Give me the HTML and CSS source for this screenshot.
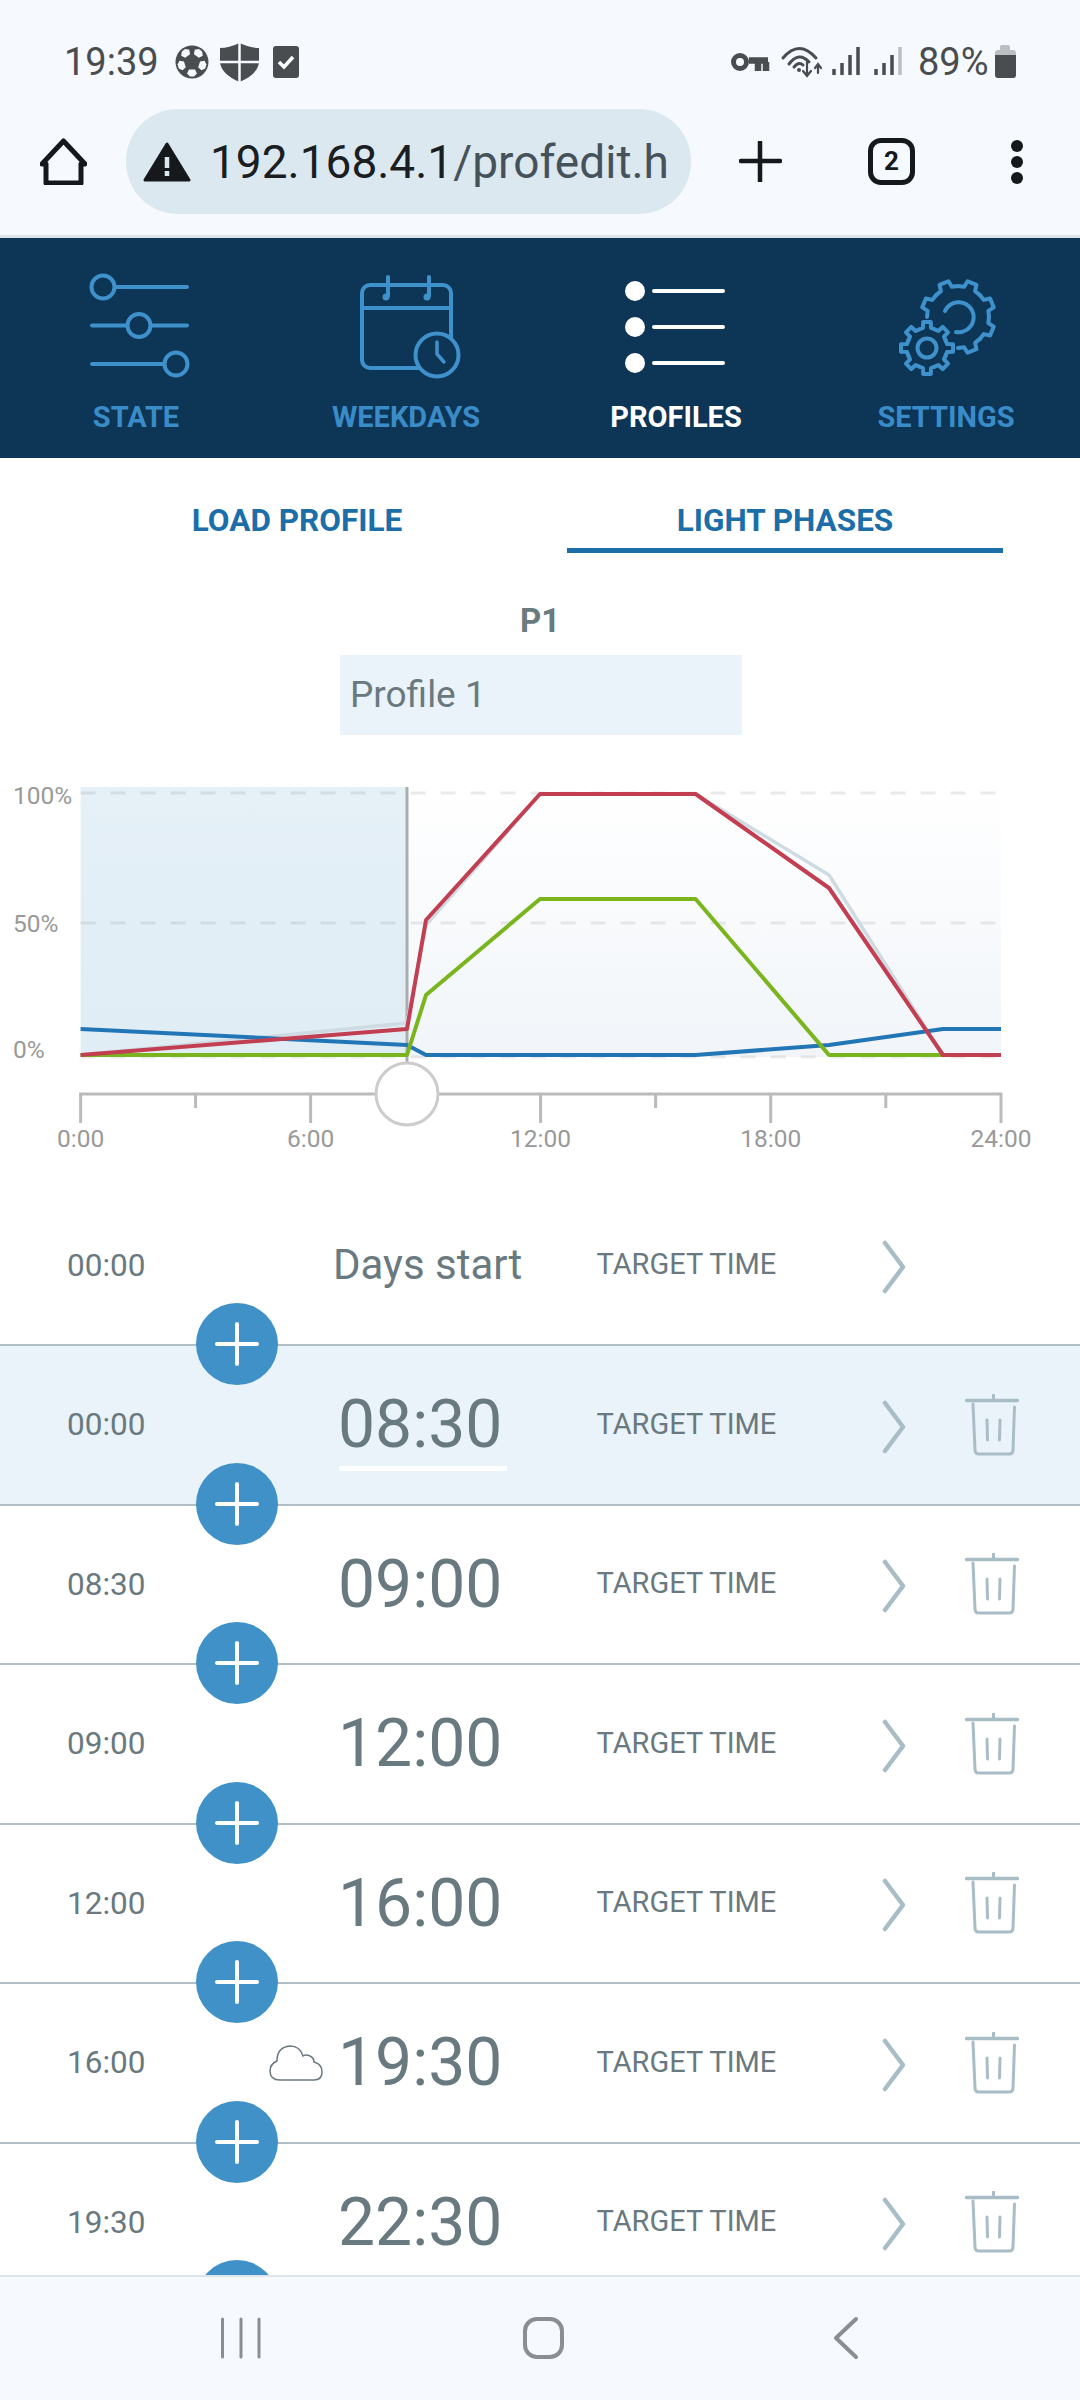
FILE: index.html
```html
<!DOCTYPE html>
<html lang="en">

<head>
    <meta charset="UTF-8">
    <meta name="viewport" content="width=device-width, initial-scale=1.0">
    <title>Profile editor</title>
    <link rel="stylesheet" href="styles.css">
</head>

<body>
    <!-- shared row icons -->
    <svg class="sprite" aria-hidden="true">
        <symbol id="chevron" viewBox="0 0 24 56">
            <path d="M3 4 L21 28 L3 52" fill="none" stroke="#a9bdc6" stroke-width="4.5" stroke-linecap="round" stroke-linejoin="round"/>
        </symbol>
        <symbol id="trash" viewBox="0 0 54 64">
            <g fill="none" stroke="#a9bdc6" stroke-width="3" stroke-linecap="round">
                <path d="M1.5 6.5 H52.5" stroke-width="3.5"/>
                <path d="M28.5 1 V6"/>
                <path d="M8 10 L10 56 Q10 60 14 60 H44 Q48 60 48 56 L49.5 13"/>
                <path d="M22 26 L22.5 46 M35 26 L34.5 46"/>
            </g>
        </symbol>
        <symbol id="plus" viewBox="0 0 82 82">
            <path d="M21 41 H61 M41 21 V61" fill="none" stroke="#fff" stroke-width="4" stroke-linecap="round"/>
        </symbol>
        <path id="tooth-small" d="M-8 -18.5 L-4 -20 L-3.8 -26 L3.8 -26 L4 -20 L8 -18.5"/>
        <path id="tooth-big" d="M-11.9 -28.6 L-5.9 -30.4 L-4.8 -36.7 L4.8 -36.7 L5.9 -30.4 L11.9 -28.6"/>
        <path id="patch" d="M-3 -7.5 L3 -7.5 L5 -11.5 L2 -14.5 L-2 -14.5 L-5 -11.5Z"/>
    </svg>

    <header class="browser">
        <div class="status">
            <span class="status-time">19:39</span>
            <svg class="status-left" viewBox="170 30 135 64">
                <circle cx="192" cy="62" r="16.5" fill="#4a4d50"/>
                <g transform="translate(192 62)" fill="#f6f9fe">
                    <use href="#patch" transform="rotate(36)"/>
                    <use href="#patch" transform="rotate(108)"/>
                    <use href="#patch" transform="rotate(180)"/>
                    <use href="#patch" transform="rotate(252)"/>
                    <use href="#patch" transform="rotate(324)"/>
                </g>
                <path d="M239.5 43 Q229 48 220 48 V62 Q221 74 239.5 82 Q258 74 259 62 V48 Q250 48 239.5 43Z" fill="#4a4d50"/>
                <path d="M239.5 43 V82 M220 62 H259" stroke="#f6f9fe" stroke-width="2.5"/>
                <rect x="273" y="46" width="26" height="32" rx="3" fill="#4a4d50"/>
                <path d="M279 62 L284 67 L293 57" fill="none" stroke="#fff" stroke-width="3.5"/>
            </svg>
            <svg class="status-right" viewBox="725 30 190 64">
                <g fill="none" stroke="#4a4d50">
                    <circle cx="740" cy="62" r="6.5" stroke-width="5"/>
                    <path d="M749 60.5 H768 M758 62 V71 M766 62 V71" stroke-width="6.5"/>
                </g>
                <g fill="none" stroke="#4a4d50" stroke-width="3" stroke-linecap="round">
                    <path d="M783 58 Q799 39 816 58"/>
                    <path d="M789 64 Q799 51 809 62"/>
                    <path d="M794 67 Q799 61 803 65"/>
                    <path d="M807 62 V75 M803 71 L807 76 L811 71 M818 73 V65 M815 68 L818 64 L821 68" stroke-width="2.2"/>
                </g>
                <circle cx="799" cy="70" r="2" fill="#4a4d50"/>
                <g stroke="#4a4d50" stroke-width="3.5">
                    <path d="M834 75 V69 M842 75 V63 M850 75 V55 M858 75 V47"/>
                    <path d="M876 75 V69 M884 75 V63 M892 75 V55"/>
                </g>
                <path d="M900 75 V47" stroke="#bcbfc2" stroke-width="3.5"/>
            </svg>
            <span class="status-battery">89%</span>
            <svg class="status-cell" viewBox="993 30 25 64">
                <path d="M1000 50 V47 Q1000 45 1002 45 H1008 Q1010 45 1010 47 V50 H1013 Q1016 50 1016 53 V56 H995 V53 Q995 50 998 50Z" fill="#bcbfc2"/>
                <path d="M995 55 H1016 V75 Q1016 78 1013 78 H998 Q995 78 995 75Z" fill="#4a4d50"/>
            </svg>
        </div>
        <div class="toolbar">
            <svg class="icon-home" viewBox="40 138 47 47">
                <path d="M46 183 V164 H42 L63.5 141 L85 164 H81 V183Z" fill="none" stroke="#15191c" stroke-width="5" stroke-linejoin="round"/>
            </svg>
            <div class="url">
                <svg class="icon-warn" viewBox="143 140 48 40">
                    <path d="M167 142 L189 178 H145Z" fill="#15191c" stroke="#15191c" stroke-width="3" stroke-linejoin="round"/>
                    <path d="M167 155 V166 M167 169 V174" stroke="#dbe8f0" stroke-width="4.5"/>
                </svg>
                <div class="url-text"><span class="url-host">192.168.4.1</span>/profedit.html</div>
            </div>
            <svg class="icon-add" viewBox="739 141 43 41">
                <path d="M741 161 H780 M760 142 V181" fill="none" stroke="#15191c" stroke-width="4.5" stroke-linecap="round"/>
            </svg>
            <div class="tab-count">2</div>
            <div class="menu-dots"><i></i><i></i><i></i></div>
        </div>
    </header>

    <nav class="nav">
        <a class="nav-item">
            <svg viewBox="0 265 270 130">
                <g fill="none" stroke="#3f91cb" stroke-width="4" stroke-linecap="round">
                    <circle cx="103" cy="287" r="11.5"/>
                    <path d="M115 287 H187"/>
                    <circle cx="139" cy="325.5" r="11.5"/>
                    <path d="M92 325.5 H127 M151 325.5 H187"/>
                    <circle cx="176" cy="364" r="11.5"/>
                    <path d="M92 364 H164"/>
                </g>
            </svg>
            <span>STATE</span>
        </a>
        <a class="nav-item">
            <svg viewBox="270 265 270 130">
                <g fill="none" stroke="#3f91cb" stroke-width="4" stroke-linecap="round">
                    <rect x="362" y="285" width="89" height="83" rx="8"/>
                    <path d="M362 308 H451"/>
                    <path d="M388 277 V296 M429 277 V296"/>
                </g>
                <circle cx="386" cy="297" r="3.5" fill="#3f91cb"/>
                <circle cx="427" cy="297" r="3.5" fill="#3f91cb"/>
                <circle cx="437" cy="355" r="21.5" fill="#0d3556" stroke="#3f91cb" stroke-width="4"/>
                <path d="M437 342 V354 L444 362" fill="none" stroke="#3f91cb" stroke-width="3.5" stroke-linecap="round"/>
            </svg>
            <span>WEEKDAYS</span>
        </a>
        <a class="nav-item">
            <svg viewBox="540 265 270 130">
                <g fill="#fff">
                    <circle cx="635" cy="291" r="10"/>
                    <circle cx="635" cy="327" r="10"/>
                    <circle cx="635" cy="363" r="10"/>
                </g>
                <path d="M654 291 H723 M654 327 H723 M654 363 H723" stroke="#fff" stroke-width="4" stroke-linecap="round"/>
            </svg>
            <span class="active">PROFILES</span>
        </a>
        <a class="nav-item">
            <svg viewBox="810 265 270 130">
                <g fill="none" stroke="#3f91cb" stroke-width="4" stroke-linecap="round" stroke-linejoin="round">
                    <g transform="translate(958 317)">
                        <use href="#tooth-big" transform="rotate(22.5)"/>
                        <use href="#tooth-big" transform="rotate(67.5)"/>
                        <use href="#tooth-big" transform="rotate(112.5)"/>
                        <use href="#tooth-big" transform="rotate(157.5)"/>
                        <use href="#tooth-big" transform="rotate(292.5)"/>
                        <use href="#tooth-big" transform="rotate(337.5)"/>
                        <path d="M-13 -6 A15 15 0 1 1 -2 15"/>
                    </g>
                    <g transform="translate(927 348)">
                        <use href="#tooth-small"/>
                        <use href="#tooth-small" transform="rotate(45)"/>
                        <use href="#tooth-small" transform="rotate(90)"/>
                        <use href="#tooth-small" transform="rotate(135)"/>
                        <use href="#tooth-small" transform="rotate(180)"/>
                        <use href="#tooth-small" transform="rotate(225)"/>
                        <use href="#tooth-small" transform="rotate(270)"/>
                        <use href="#tooth-small" transform="rotate(315)"/>
                        <circle r="9.5"/>
                    </g>
                </g>
            </svg>
            <span>SETTINGS</span>
        </a>
    </nav>

    <main class="content">
        <div class="tabs">
            <div class="tab">LOAD PROFILE</div>
            <div class="tab selected">LIGHT PHASES</div>
        </div>
        <div class="profile-id">P1</div>
        <div class="profile-name">Profile 1</div>

        <!-- chart uses page coordinates via the viewBox -->
        <svg class="chart" viewBox="0 760 1080 426.5">
            <defs>
                <linearGradient id="plot-bg" x1="0" y1="0" x2="0" y2="1">
                    <stop offset="0" stop-color="#ffffff"/>
                    <stop offset="1" stop-color="#f1f5f9"/>
                </linearGradient>
                <linearGradient id="past-bg" x1="0" y1="0" x2="0" y2="1">
                    <stop offset="0" stop-color="#e5f0f7"/>
                    <stop offset="1" stop-color="#e0edf5"/>
                </linearGradient>
            </defs>
            <rect x="407" y="787" width="594" height="270" fill="url(#plot-bg)"/>
            <rect x="80.6" y="787" width="326.4" height="270" fill="url(#past-bg)"/>
            <path d="M80.6 793 H1001 M80.6 923 H1001 M80.6 1057 H1001" stroke="#000" stroke-opacity=".08" stroke-width="3" stroke-dasharray="15 15" fill="none"/>
            <path d="M407 787 V1063" stroke="#a9adb0" stroke-width="3"/>
            <g fill="none" stroke-width="4" stroke-linejoin="round">
                <polyline points="80.6,1055 407,1023 426,925 540,794 695.6,794 829,875 943,1055 1001,1055" stroke="#cfdbe2" stroke-width="3.5"/>
                <polyline points="80.6,1029 407,1045 426,1055 695.6,1055 829,1045 943,1029 1001,1029" stroke="#2276b6"/>
                <polyline points="80.6,1055 407,1055 426,995 540,899 695.6,899 829,1055 943,1055" stroke="#7ab51d"/>
                <polyline points="80.6,1055 407,1029 426,920 540,794 695.6,794 829,888 943,1055 1001,1055" stroke="#c23f52"/>
            </g>
            <path d="M80.6 1123 V1094 H1001 V1123 M195.6 1094 V1108 M310.6 1094 V1123 M425.6 1094 V1108 M540.6 1094 V1123 M655.6 1094 V1108 M770.7 1094 V1123 M885.8 1094 V1108" fill="none" stroke="#bbb" stroke-width="3"/>
            <circle cx="407" cy="1094" r="31" fill="#fff" stroke="#ccc" stroke-width="3"/>
            <g class="chart-label">
                <text x="13" y="804">100%</text>
                <text x="13" y="932">50%</text>
                <text x="13" y="1058">0%</text>
            </g>
            <g class="chart-label chart-hours">
                <text x="80.6" y="1147">0:00</text>
                <text x="310.6" y="1147">6:00</text>
                <text x="540.6" y="1147">12:00</text>
                <text x="770.7" y="1147">18:00</text>
                <text x="1001" y="1147">24:00</text>
            </g>
        </svg>

        <div class="phases">
            <div class="phase">
                <div class="phase-from">00:00</div>
                <div class="phase-label">Days start</div>
                <div class="phase-mode">TARGET TIME</div>
                <svg class="phase-next"><use href="#chevron"/></svg>
                <button class="phase-add"><svg><use href="#plus"/></svg></button>
            </div>
            <div class="phase current">
                <div class="phase-from">00:00</div>
                <div class="phase-time">08:30</div>
                <div class="phase-mode">TARGET TIME</div>
                <svg class="phase-next"><use href="#chevron"/></svg>
                <svg class="phase-trash"><use href="#trash"/></svg>
                <button class="phase-add"><svg><use href="#plus"/></svg></button>
            </div>
            <div class="phase">
                <div class="phase-from">08:30</div>
                <div class="phase-time">09:00</div>
                <div class="phase-mode">TARGET TIME</div>
                <svg class="phase-next"><use href="#chevron"/></svg>
                <svg class="phase-trash"><use href="#trash"/></svg>
                <button class="phase-add"><svg><use href="#plus"/></svg></button>
            </div>
            <div class="phase">
                <div class="phase-from">09:00</div>
                <div class="phase-time">12:00</div>
                <div class="phase-mode">TARGET TIME</div>
                <svg class="phase-next"><use href="#chevron"/></svg>
                <svg class="phase-trash"><use href="#trash"/></svg>
                <button class="phase-add"><svg><use href="#plus"/></svg></button>
            </div>
            <div class="phase">
                <div class="phase-from">12:00</div>
                <div class="phase-time">16:00</div>
                <div class="phase-mode">TARGET TIME</div>
                <svg class="phase-next"><use href="#chevron"/></svg>
                <svg class="phase-trash"><use href="#trash"/></svg>
                <button class="phase-add"><svg><use href="#plus"/></svg></button>
            </div>
            <div class="phase">
                <div class="phase-from">16:00
                    <svg class="phase-cloud" viewBox="0 0 56 38">
                        <path d="M12 36 Q2 36 2 27 Q2 20 9 17 Q9 3 22 2 Q32 2 35 12 Q38 10 42 12 Q46 14 46 18 Q54 20 54 28 Q54 36 46 36Z" fill="none" stroke="#69797f" stroke-width="1.5"/>
                    </svg>
                </div>
                <div class="phase-time">19:30</div>
                <div class="phase-mode">TARGET TIME</div>
                <svg class="phase-next"><use href="#chevron"/></svg>
                <svg class="phase-trash"><use href="#trash"/></svg>
                <button class="phase-add"><svg><use href="#plus"/></svg></button>
            </div>
            <div class="phase">
                <div class="phase-from">19:30</div>
                <div class="phase-time">22:30</div>
                <div class="phase-mode">TARGET TIME</div>
                <svg class="phase-next"><use href="#chevron"/></svg>
                <svg class="phase-trash"><use href="#trash"/></svg>
                <button class="phase-add"><svg><use href="#plus"/></svg></button>
            </div>
        </div>
    </main>

    <footer class="softkeys">
        <svg viewBox="215 2312 650 50">
            <g fill="none" stroke="#8a8d92" stroke-linecap="round" stroke-linejoin="round">
                <path d="M222.5 2318 V2356 M241 2318 V2356 M259 2318 V2356" stroke-width="3"/>
                <rect x="525" y="2318" width="37" height="38" rx="12" stroke-width="4"/>
                <path d="M856 2318 L836 2337 L856 2356" stroke-width="4"/>
            </g>
        </svg>
    </footer>
</body>

</html>
```

FILE: styles.css
```css
* {
    box-sizing: border-box;
}

html,
body {
    margin: 0;
    height: 2400px;
    overflow: hidden;
}

body {
    display: flex;
    flex-direction: column;
    background: #fff;
    font-family: Roboto, "Liberation Sans", sans-serif;
}

.sprite {
    position: absolute;
    width: 0;
    height: 0;
}

/* browser chrome */
.browser {
    height: 238px;
    padding-top: 30px;
    background: #f6f9fe;
    border-bottom: 3px solid #dde4ea;
}

.status {
    display: flex;
    align-items: center;
    height: 64px;
    padding-left: 64px;
    color: #4a4d50;
    font-size: 38px;
}

.status-time {
    width: 106px;
}

.status svg {
    height: 64px;
}

.status-left {
    width: 135px;
}

.status-right {
    width: 190px;
    margin-left: 420px;
}

.status-battery {
    width: 78px;
    padding-left: 3px;
}

.status-cell {
    width: 25px;
}

.toolbar {
    display: flex;
    align-items: center;
    height: 105px;
    margin-top: 15px;
    padding-left: 40px;
}

.icon-home {
    width: 47px;
    height: 47px;
}

.url {
    display: flex;
    align-items: center;
    width: 565px;
    height: 105px;
    margin-left: 39px;
    padding-left: 17px;
    background: #dbe8f0;
    border-radius: 52px;
}

.icon-warn {
    flex: none;
    width: 48px;
    height: 40px;
}

.url-text {
    width: 459px;
    margin-left: 19px;
    overflow: hidden;
    color: #46525a;
    font-size: 46px;
    white-space: nowrap;
}

.url-host {
    color: #1a1e22;
}

.icon-add {
    width: 43px;
    height: 41px;
    margin-left: 48px;
}

.tab-count {
    width: 47px;
    height: 47px;
    margin-left: 86px;
    border: 5px solid #15191c;
    border-radius: 13px;
    color: #15191c;
    font-size: 26px;
    font-weight: 700;
    line-height: 37px;
    text-align: center;
}

.menu-dots {
    display: flex;
    flex-direction: column;
    gap: 4px;
    margin-left: 96px;
}

.menu-dots i {
    width: 12px;
    height: 12px;
    border-radius: 50%;
    background: #15191c;
}

/* app nav */
.nav {
    display: grid;
    grid-template-columns: repeat(4, 270px);
    height: 220px;
    padding-top: 27px;
    background: #0d3556;
}

.nav-item {
    display: flex;
    flex-direction: column;
    align-items: center;
    color: #3a8cc8;
    font-size: 29px;
    font-weight: 700;
    line-height: 44px;
}

.nav-item span {
    margin-left: 2px;
}

.nav-item svg {
    width: 270px;
    height: 130px;
}

.nav-item .active {
    color: #fff;
}

/* page content */
.content {
    flex: 1;
    min-height: 0;
    overflow: hidden;
}

.tabs {
    display: grid;
    grid-template-columns: 434px 436px;
    column-gap: 53px;
    padding-left: 80px;
}

.tab {
    height: 95px;
    padding-top: 48px;
    color: #1c6ea9;
    font-size: 31.5px;
    font-weight: 700;
    line-height: 30px;
    text-align: center;
}

.tab.selected {
    border-bottom: 5px solid #1c6ea9;
}

.profile-id {
    margin-top: 53px;
    color: #6a7b80;
    font-size: 33px;
    font-weight: 700;
    line-height: 30px;
    text-align: center;
}

.profile-name {
    width: 402px;
    height: 80px;
    margin: 19px 0 0 340px;
    padding-left: 10px;
    background: #eaf3f9;
    color: #69797f;
    font-size: 37px;
    line-height: 80px;
}

.chart {
    display: block;
    width: 1080px;
    height: 426.5px;
    margin-top: 25px;
}

.chart-label {
    fill: #999;
    font-size: 24.5px;
}

.chart-hours {
    text-anchor: middle;
}

/* phase list */
.phase {
    position: relative;
    display: flex;
    align-items: center;
    height: 159.5px;
    border-bottom: 2px solid #b0bec5;
    color: #69797f;
}

.phase.current {
    background: #eaf3f9;
}

.phase-from {
    display: flex;
    flex: none;
    align-items: center;
    justify-content: space-between;
    width: 338px;
    padding: 0 14px 0 67px;
    font-size: 31.5px;
}

.phase-cloud {
    width: 56px;
    height: 38px;
}

.phase-label,
.phase-time {
    position: relative;
    flex: none;
    color: #68797f;
}

.phase-label {
    width: 263.5px;
    margin-left: -5px;
    padding-bottom: 2px;
    font-size: 42px;
}

.phase-time {
    width: 258.5px;
    font-size: 66px;
}

.current .phase-time::after {
    content: "";
    position: absolute;
    left: 1px;
    bottom: -8px;
    width: 168px;
    height: 5px;
    background: #fff;
}

.phase-mode {
    flex: none;
    width: 285.5px;
    padding-bottom: 2px;
    font-size: 29px;
}

.phase-next {
    flex: none;
    width: 24px;
    height: 56px;
    margin-top: 4px;
}

.phase-trash {
    flex: none;
    width: 54px;
    height: 64px;
    margin-left: 59px;
    margin-top: 2px;
}

.phase-add {
    position: absolute;
    left: 196px;
    bottom: -41px;
    z-index: 1;
    width: 82px;
    height: 82px;
    padding: 0;
    border: 0;
    border-radius: 50%;
    background: #3f91c8;
}

.phase-add svg {
    display: block;
    width: 82px;
    height: 82px;
}

/* android soft keys */
.softkeys {
    height: 125px;
    padding-top: 36px;
    background: #f6f9fe;
    border-top: 2px solid #dde4ea;
}

.softkeys svg {
    display: block;
    width: 650px;
    height: 50px;
    margin-left: 215px;
}
```
